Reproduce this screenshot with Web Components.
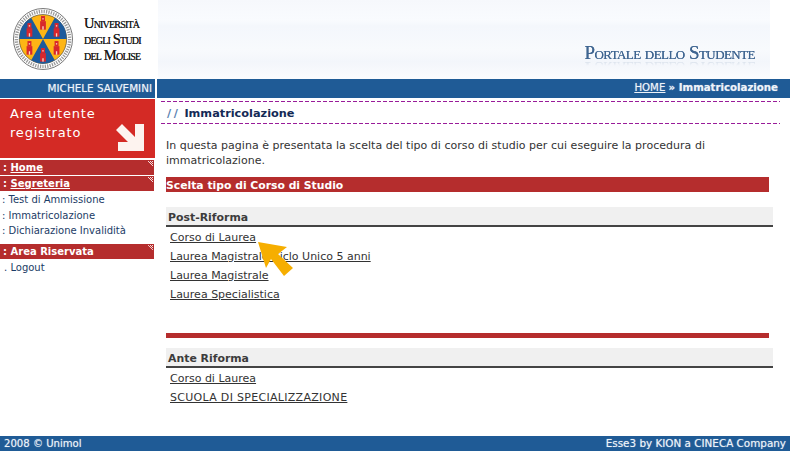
<!DOCTYPE html>
<html lang="it">
<head>
<meta charset="utf-8">
<title>Portale dello Studente</title>
<style>
  html, body { margin: 0; padding: 0; background: #fff; }
  body { width: 790px; height: 451px; overflow: hidden; font: 11px/15px "DejaVu Sans", Verdana, sans-serif; color: #333; }
</style>
</head>
<body>
<esse-page>
  <esse-header slot="top"></esse-header>
  <esse-bar slot="top">
    <span slot="user">MICHELE SALVEMINI</span>
    <span slot="crumb"><u>HOME</u> <b>» Immatricolazione</b></span>
  </esse-bar>
  <esse-sidebar slot="side">
    <esse-area></esse-area>
    <esse-menu-head underline style="margin-top:2px">Home</esse-menu-head>
    <esse-menu-head underline style="margin-top:1px">Segreteria</esse-menu-head>
    <esse-menu-item>Test di Ammissione</esse-menu-item>
    <esse-menu-item>Immatricolazione</esse-menu-item>
    <esse-menu-item>Dichiarazione Invalidità</esse-menu-item>
    <esse-menu-head style="margin-top:6px">Area Riservata</esse-menu-head>
    <esse-menu-item mark="." style="padding-left:4px">Logout</esse-menu-item>
  </esse-sidebar>
  <esse-content slot="main">
    <esse-title>Immatricolazione</esse-title>
    <p>In questa pagina è presentata la scelta del tipo di corso di studio per cui eseguire la procedura di immatricolazione.</p>
    <esse-band>Scelta tipo di Corso di Studio</esse-band>
    <esse-group label="Post-Riforma" style="margin-top:15px">
      <a>Corso di Laurea</a>
      <a>Laurea Magistrale Ciclo Unico 5 anni</a>
      <a>Laurea Magistrale</a>
      <a>Laurea Specialistica</a>
    </esse-group>
    <esse-rule></esse-rule>
    <esse-group label="Ante Riforma">
      <a>Corso di Laurea</a>
      <a class="caps">SCUOLA DI SPECIALIZZAZIONE</a>
    </esse-group>
    <esse-pointer></esse-pointer>
  </esse-content>
  <esse-footer slot="bottom">
    <span class="copy">2008 © Unimol</span>
    <span>Esse3 by KION a CINECA Company</span>
  </esse-footer>
</esse-page>

<script>
// small helper, every element is just a shadow root with its own css + markup
function define(name, html, init) {
  customElements.define(name, class extends HTMLElement {
    constructor() {
      super();
      this.attachShadow({ mode: "open" });
    }
    connectedCallback() {
      this.shadowRoot.innerHTML = html;
      if (init) init(this);
    }
  });
}

define("esse-page", `
  <style>
    :host { display: grid; grid-template-columns: 155px 1fr; grid-template-rows: 79px 19px 338px 15px; width: 790px; height: 451px; overflow: hidden; }
    ::slotted([slot=top]), ::slotted([slot=bottom]) { grid-column: 1 / -1; }
  </style>
  <slot name="top"></slot>
  <slot name="side"></slot>
  <slot name="main"></slot>
  <slot name="bottom"></slot>
`);

// tower used on the seal
const tower = (x, y) => `<g transform="translate(${x} ${y}) scale(.85)" fill="#d8262c">
  <rect x="-3.5" y="-1" width="7" height="10"/><rect x="-2.4" y="-7" width="4.8" height="6"/>
  <rect x="-.8" y="5" width="1.6" height="4" fill="#f7d9c8"/><rect x="-.8" y="-4.5" width="1.6" height="1.6" fill="#f7d9c8"/></g>`;

define("esse-header", `
  <style>
    :host { display: flex; height: 79px; background: #fff; }
    .logo { width: 158px; display: flex; padding: 8px 0 0 13px; box-sizing: border-box; gap: 11px; flex: none; }
    svg { flex: none; }
    .name { font: small-caps 14.5px/16px "Liberation Serif", serif; color: #1d1d1d; padding-top: 7px; letter-spacing: -.8px; text-shadow: 0 0 .5px #333; }
    .name span { display: block; white-space: nowrap; }
    .banner { width: 612px; height: 79px; display: flex; align-items: flex-end; justify-content: flex-end; padding: 0 15px 15px 0; box-sizing: border-box;
      background: linear-gradient(#f6f8fc 0, #f9fbfe 20px, #f4f7fc 26px, #f8fafd 50px, #f3f6fb 62px, #fbfcfe 79px); }
    .banner span { font: small-caps 19px/22px "Liberation Serif", serif; color: #3f6591; letter-spacing: -.55px; white-space: nowrap; text-shadow: 0 0 .6px #3f6591;
      -webkit-box-reflect: below -7px linear-gradient(transparent 60%, rgba(255,255,255,.3)); }
  </style>
  <div class="logo">
    <svg width="60" height="62" viewBox="0 0 62 62" preserveAspectRatio="none">
      <circle cx="31" cy="31" r="30.5" fill="#fff" stroke="#555" stroke-width=".8"/>
      <circle cx="31" cy="31" r="27.5" fill="none" stroke="#999" stroke-width="3.5" stroke-dasharray="1.3 1.2"/>
      <circle cx="31" cy="31" r="24.5" fill="#fdb515" stroke="#333" stroke-width=".6"/>
      <path d="M31 31 6.5 31A24.5 24.5 0 0 1 18.8 9.8Z M31 31 43.2 9.8A24.5 24.5 0 0 1 55.5 31Z M31 31 18.8 52.2A24.5 24.5 0 0 0 43.2 52.2Z" fill="#1c5a9c"/>
      ${tower(31, 14)}${tower(17, 21)}${tower(45, 21)}
      ${tower(17, 39)}${tower(45, 39)}${tower(31, 46)}
    </svg>
    <div class="name"><span>Università</span><span>degli Studi</span><span>del Molise</span></div>
  </div>
  <div class="banner"><span>Portale dello Studente</span></div>
`);

define("esse-bar", `
  <style>
    :host { display: flex; height: 19px; color: #eef3f9; line-height: 18px; font-size: 10.4px; text-shadow: 0 0 1px rgba(255,255,255,.55); }
    div { background: #1f5b96; height: 18.5px; box-sizing: border-box; white-space: nowrap; }
    .l { width: 155px; text-align: right; padding-right: 3px; flex: none; }
    .r { margin-left: 2px; flex: 1; text-align: right; padding-right: 12px; font-size: 10.2px; }
  </style>
  <div class="l"><slot name="user"></slot></div>
  <div class="r"><slot name="crumb"></slot></div>
`);

define("esse-sidebar", `
  <style>:host { display: block; width: 155px; padding-top: 1px; font-size: 10px; }</style>
  <slot></slot>
`);

define("esse-area", `
  <style>
    :host { display: block; position: relative; height: 59px; background: #d42a25; color: #fff; box-sizing: border-box; padding: 6px 0 0 10px;
      font-size: 13px; line-height: 18.5px; letter-spacing: .8px; }
    svg { position: absolute; left: 115px; top: 24px; }
  </style>
  Area utente<br>registrato
  <svg width="30" height="29" viewBox="0 0 30 29"><path d="M1 7 7 1 20 14 20 1 29 1 29 28 3 28 3 19 13 19Z" fill="#fdf3ef"/></svg>
`);

define("esse-menu-head", `
  <style>
    :host { display: block; position: relative; width: 154px; height: 15px; background: #b52d2d; color: #fff; font-weight: bold; line-height: 16px; padding-left: 3px; box-sizing: border-box; }
    :host([underline]) span { text-decoration: underline; }
    i { position: absolute; right: 1px; top: 1px; width: 6px; height: 6px;
      background: repeating-conic-gradient(#f5dcdc 0 25%, transparent 0 50%) 0 0 / 2px 2px;
      clip-path: polygon(0 0, 100% 100%, 100% 0); }
  </style>
  : <span><slot></slot></span><i></i>
`);

define("esse-menu-item", `
  <style>
    :host { display: block; color: #1b3c66; height: 15.5px; line-height: 17px; padding-left: 2px; white-space: nowrap; }
  </style>
  <span id="m">:</span> <slot></slot>
`, el => {
  if (el.hasAttribute("mark")) el.shadowRoot.getElementById("m").textContent = el.getAttribute("mark");
});

define("esse-content", `
  <style>
    :host { display: block; position: relative; padding: 3px 10px 0 11px; }
    ::slotted(p) { margin: 14px 0 0; width: 580px; color: #333; line-height: 15px; letter-spacing: .03px; }
  </style>
  <slot></slot>
`);

define("esse-title", `
  <style>
    :host { display: block; margin-left: -5px; height: 23px; box-sizing: border-box; line-height: 25px; padding-left: 6px; width: 619px;
      background: repeating-linear-gradient(90deg, #991c99 0 4px, transparent 4px 6px) top / 100% 1px no-repeat,
        repeating-linear-gradient(90deg, #991c99 0 4px, transparent 4px 6px) bottom / 100% 1px no-repeat;
      font-weight: bold; font-size: 11.3px; color: #142a55; }
    i { color: #5a7fb0; font-style: normal; letter-spacing: 2.6px; }
  </style>
  <i>//</i> <slot></slot>
`);

define("esse-band", `
  <style>
    :host { display: block; margin-top: 9px; width: 603px; height: 15px; line-height: 17px; background: #b52d2d; color: #fff; font-weight: bold; font-size: 10.8px; }
  </style>
  <slot></slot>
`);

define("esse-group", `
  <style>
    :host { display: block; width: 607px; }
    h4 { margin: 0; height: 20px; box-sizing: border-box; background: #f0f0f0; border-bottom: 2px solid #444; color: #3c3c3c; font-size: 10.9px; line-height: 21px; padding-left: 2px; }
    .links { display: flex; flex-direction: column; align-items: flex-start; gap: 4px; padding: 3px 0 0 4px; }
    ::slotted(a) { color: #333; text-decoration: underline; line-height: 15px; white-space: nowrap; }
    ::slotted(a.caps) { letter-spacing: .3px; }
  </style>
  <h4 id="h"></h4>
  <div class="links"><slot></slot></div>
`, el => {
  el.shadowRoot.getElementById("h").textContent = el.getAttribute("label");
});

define("esse-rule", `
  <style>:host { display: block; margin: 31px 0 10px; width: 603px; height: 5px; background: #b52d2d; }</style>
`);

define("esse-pointer", `
  <style>:host { position: absolute; left: 102px; top: 143px; width: 38px; height: 36px; } svg { display: block; }</style>
  <svg width="38" height="36" viewBox="0 0 38 36"><path d="M1 1 30 6 21 13 36 27 27 35 14 18 9 27Z" fill="#f6ae00"/></svg>
`);

define("esse-footer", `
  <style>
    :host { display: flex; justify-content: space-between; height: 15px; line-height: 15px; background: #1f5b96; color: #eef3f9; padding: 0 4px; box-sizing: border-box; white-space: nowrap; font-size: 10.4px; text-shadow: 0 0 1px rgba(255,255,255,.55); }
    ::slotted(.copy) { font-size: 10.1px; }
  </style>
  <slot></slot>
`);
</script>
</body>
</html>
